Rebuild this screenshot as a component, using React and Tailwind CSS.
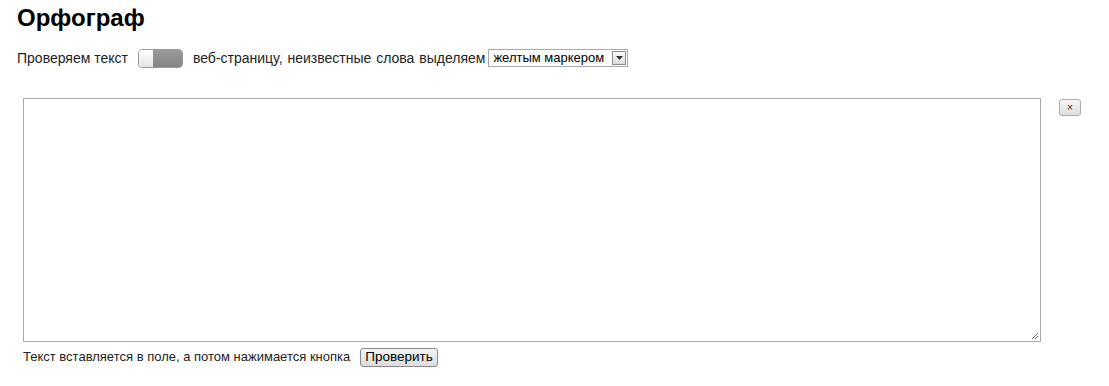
import React from "react";

const App = () => {
  return (
    <div className="min-h-screen bg-white text-black font-['Liberation_Sans',Arial,sans-serif]">
      <div className="pl-[17px] pt-[3px]">
        {/* Title */}
        <h1 className="text-[24px] leading-[30px] font-bold">Орфограф</h1>

        {/* Options row */}
        <div className="mt-[15px] flex items-center text-[14px] h-[20px]">
          <span className="text-[#222]">Проверяем текст</span>
          <div className="ml-[10px] w-[45px] h-[19px] rounded-[4px] border border-[#9a9a9a] flex overflow-hidden">
            <div className="w-[14px] bg-gradient-to-b from-[#ffffff] to-[#e4e4e4]" />
            <div className="flex-1 bg-gradient-to-b from-[#9a9a9a] to-[#858585]" />
          </div>
          <span className="ml-[10px] text-[#222] [word-spacing:1px]">веб-страницу, неизвестные слова выделяем</span>
          <div className="ml-[3px] w-[140px] h-[18px] border border-[#a9a9a9] flex items-center justify-between pl-[4px] pr-[1px] text-[13px]">
            <span>желтым маркером</span>
            <div className="w-[14px] h-[14px] border border-[#8f8f8f] bg-gradient-to-b from-[#fafafa] to-[#dcdcdc] flex items-center justify-center">
              <svg width="7" height="4" viewBox="0 0 7 4">
                <path d="M0 0 H7 L3.5 4 Z" fill="#333" />
              </svg>
            </div>
          </div>
        </div>

        {/* Textarea row */}
        <div className="mt-[30px] flex items-start">
          <div className="ml-[6px] relative w-[1018px] h-[244px] border border-[#a9a9a9] bg-white">
            <svg className="absolute right-[1px] bottom-[1px]" width="9" height="9" viewBox="0 0 9 9">
              <path d="M8 2 L2 8 M8 5 L5 8" stroke="#777" strokeWidth="1" />
            </svg>
          </div>
          <button className="ml-[18px] mt-[1px] w-[22px] h-[17px] rounded-[3px] border border-[#adadad] bg-gradient-to-b from-[#f6f6f6] to-[#dedede] flex items-center justify-center text-[10px] leading-none text-[#222]">
            ×
          </button>
        </div>

        {/* Bottom row */}
        <div className="mt-[5px] ml-[6px] flex items-center text-[13px] h-[20px]">
          <span className="text-[#222]">Текст вставляется в поле, а потом нажимается кнопка</span>
          <button className="ml-[10px] h-[19px] px-[4px] rounded-[3px] border border-[#8a8a8a] bg-gradient-to-b from-[#f5f5f5] to-[#dcdcdc] text-[13.5px] leading-none">
            Проверить
          </button>
        </div>
      </div>
    </div>
  );
};

export default App;
